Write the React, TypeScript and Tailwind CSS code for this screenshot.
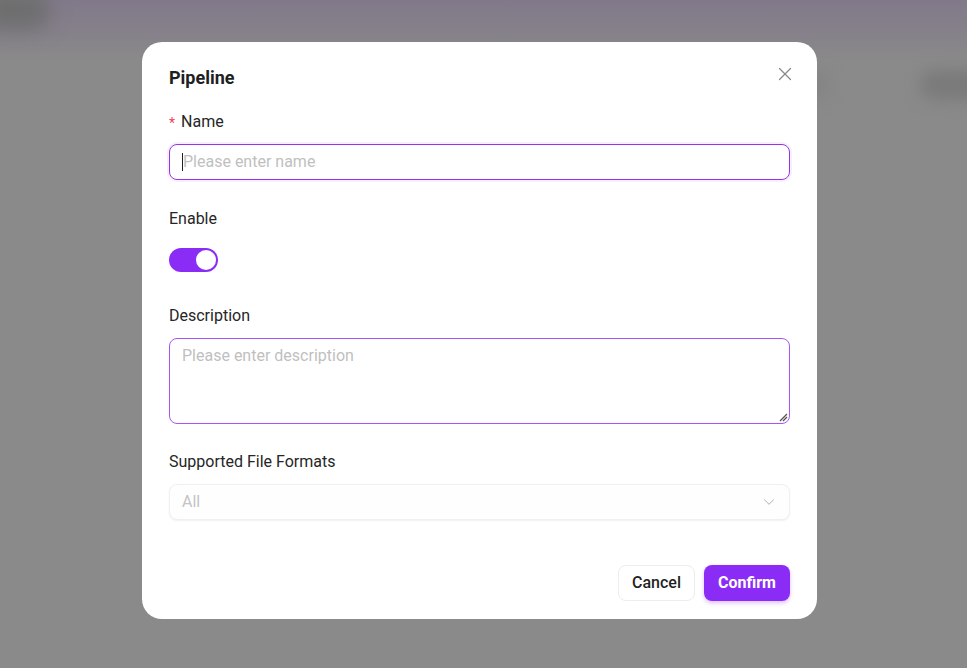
import { X, ChevronDown } from "lucide-react";

export default function App() {
  return (
    <div className="relative w-[967px] h-[668px] overflow-hidden bg-[#8a8a8a] font-['Roboto',sans-serif]">
      {/* blurred page behind the modal */}
      <div className="absolute inset-x-0 top-0 h-[60px] bg-gradient-to-b from-[#81798a] via-[#85808a] to-transparent" />
      <div className="absolute left-[-20px] top-[-10px] w-[70px] h-[40px] rounded-full bg-[#6e6e6e] blur-[10px]" />
      <div className="absolute left-[920px] top-[70px] w-[70px] h-[30px] rounded-full bg-[#7a7a7a] blur-[8px]" />
      <div className="absolute left-[790px] top-[70px] w-[40px] h-[30px] rounded-full bg-[#848484] blur-[8px]" />

      <div className="relative pl-[142px] pt-[42px]">
        <div className="w-[675px] h-[577px] bg-white rounded-[20px] px-[27px] pt-[24px] pb-[18px] flex flex-col">
          <div className="flex items-center justify-between h-[22px]">
            <h2 className="text-[18px] font-bold text-[#1f1f1f]">Pipeline</h2>
            <button className="text-[#8a8a8a] -mr-[6px] -mt-[6px]">
              <X className="w-[22px] h-[22px]" strokeWidth={1.4} />
            </button>
          </div>

          <label className="mt-[22px] h-[24px] flex items-center text-[16px] text-[#262626]">
            <span className="text-[#f0445a] mr-[6px] text-[14px] mt-[2px]">*</span>
            Name
          </label>
          <div className="mt-[10px] h-[36px] rounded-[8px] border border-[#9333ea] shadow-[0_0_0_2px_rgba(147,51,234,0.08)] flex items-center px-[12px]">
            <span className="w-px h-[18px] bg-[#1f1f1f]" />
            <span className="text-[16px] text-[#bfbfbf]">Please enter name</span>
          </div>

          <label className="mt-[27px] h-[24px] flex items-center text-[16px] text-[#262626]">Enable</label>
          <div className="mt-[17px] w-[49px] h-[24px] rounded-full bg-[#8a2cf6] flex items-center justify-end pr-[2px]">
            <span className="w-[20px] h-[20px] rounded-full bg-white" />
          </div>

          <label className="mt-[32px] h-[24px] flex items-center text-[16px] text-[#262626]">Description</label>
          <div className="relative mt-[10px] h-[86px] rounded-[8px] border border-[#a855f7] px-[12px] pt-[5px]">
            <span className="text-[16px] text-[#bfbfbf]">Please enter description</span>
            <svg className="absolute right-[1px] bottom-[1px]" width="9" height="9" viewBox="0 0 9 9">
              <path d="M1 8 L8 1 M4 8 L8 4" stroke="#555" strokeWidth="1.3" />
            </svg>
          </div>

          <label className="mt-[26px] h-[24px] flex items-center text-[16px] text-[#262626]">Supported File Formats</label>
          <div className="mt-[10px] h-[36px] rounded-[8px] border border-[#f0f0f0] bg-[#fefefe] shadow-[0_1px_2px_rgba(0,0,0,0.06)] flex items-center justify-between px-[12px]">
            <span className="text-[16px] text-[#c4c4c4]">All</span>
            <ChevronDown className="w-[18px] h-[18px] text-[#bdbdbd] -mr-[1px]" strokeWidth={1.4} />
          </div>

          <div className="mt-auto flex justify-end gap-[9px]">
            <button className="h-[36px] w-[77px] rounded-[8px] border border-[#ededed] bg-white text-[16px] font-medium text-[#1f1f1f]">
              Cancel
            </button>
            <button className="h-[36px] w-[86px] rounded-[8px] bg-[#8a2cf6] text-[16px] font-bold text-white shadow-[0_2px_4px_rgba(138,44,246,0.3)]">
              Confirm
            </button>
          </div>
        </div>
      </div>
    </div>
  );
}
